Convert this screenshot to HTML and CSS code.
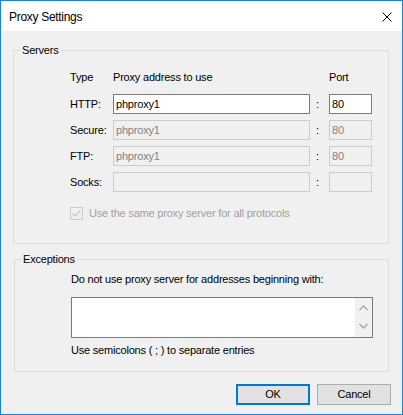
FILE: index.html
```html
<!DOCTYPE html>
<html>
<head>
<meta charset="utf-8">
<link rel="stylesheet" href="styles.css">
</head>
<body>
<div class="window">
  <div class="titlebar">
    <span class="title">Proxy Settings</span>
    <svg class="close" width="10" height="10" viewBox="0 0 10 10"><path d="M0.5 0.5 L9.5 9.5 M9.5 0.5 L0.5 9.5" stroke="#000" stroke-width="1" fill="none"/></svg>
  </div>
  <div class="content">
    <fieldset class="group servers">
      <legend>Servers</legend>
      <div class="group-body servers-body">
        <div class="grid">
          <span class="hdr">Type</span>
          <span class="hdr">Proxy address to use</span>
          <span></span>
          <span class="hdr">Port</span>

          <span class="lbl">HTTP:</span>
          <div class="field">phproxy1</div>
          <span class="colon">:</span>
          <div class="field">80</div>

          <span class="lbl">Secure:</span>
          <div class="field disabled">phproxy1</div>
          <span class="colon">:</span>
          <div class="field disabled">80</div>

          <span class="lbl">FTP:</span>
          <div class="field disabled">phproxy1</div>
          <span class="colon">:</span>
          <div class="field disabled">80</div>

          <span class="lbl">Socks:</span>
          <div class="field disabled"></div>
          <span class="colon">:</span>
          <div class="field disabled"></div>
        </div>
        <div class="check-row">
          <span class="checkbox"><svg width="11" height="11" viewBox="0 0 11 11"><path d="M1.5 5.5 L4 8 L9.5 2.5" stroke="#c4c4c4" stroke-width="1.2" fill="none"/></svg></span>
          <span class="check-label">Use the same proxy server for all protocols</span>
        </div>
      </div>
    </fieldset>

    <fieldset class="group exceptions">
      <legend>Exceptions</legend>
      <div class="group-body exceptions-body">
        <div class="exc-text">Do not use proxy server for addresses beginning with:</div>
        <div class="textarea">
          <div class="text-body"></div>
          <div class="scrollbar">
            <svg width="9" height="6" viewBox="0 0 9 6"><path d="M0.5 5 L4.5 1 L8.5 5" stroke="#a6a6a6" stroke-width="1.3" fill="none"/></svg>
            <svg width="9" height="6" viewBox="0 0 9 6"><path d="M0.5 1 L4.5 5 L8.5 1" stroke="#a6a6a6" stroke-width="1.3" fill="none"/></svg>
          </div>
        </div>
        <div class="exc-note">Use semicolons ( ; ) to separate entries</div>
      </div>
    </fieldset>

    <div class="buttons">
      <div class="btn default">OK</div>
      <div class="btn">Cancel</div>
    </div>
  </div>
</div>
</body>
</html>
```

FILE: styles.css
```css
* { box-sizing: border-box; }
html, body { margin: 0; padding: 0; background: #ffffff; }
body {
  font-family: "Liberation Sans", Arial, sans-serif;
  font-size: 11px;
  letter-spacing: -0.2px;
  color: #000;
}
.window {
  width: 403px;
  height: 415px;
  border: 1px solid #1883d7;
  background: #f0f0f0;
  display: flex;
  flex-direction: column;
}
.titlebar {
  height: 30px;
  background: #ffffff;
  display: flex;
  align-items: center;
  padding: 0 10px 0 8px;
  flex-shrink: 0;
}
.title {
  font-size: 12px;
  letter-spacing: -0.3px;
  flex: 1;
  padding-top: 1px;
}
.close { display: block; margin-top: 1px; }
.content {
  flex: 1;
  display: flex;
  flex-direction: column;
}
.group {
  margin: 0;
  padding: 0;
  border: 1px solid #dcdcdc;
  min-width: 0;
}
.group legend {
  padding: 0 2px;
  margin-left: 6px;
  line-height: 15px;
  height: 15px;
}
.servers { margin: 12px 13px 0 12px; }
.servers-body { padding: 12px 0 22px 56px; }
.grid {
  display: grid;
  grid-template-columns: 43px 197px 19px 43px;
  grid-template-rows: 18px repeat(4, 20px);
  row-gap: 6px;
  align-items: center;
}
.hdr { align-self: start; line-height: 15px; }
.lbl { line-height: 15px; }
.colon { padding-left: 6px; line-height: 15px; }
.field {
  height: 20px;
  border: 1px solid #7a7a7a;
  background: #fff;
  padding: 0 2px;
  line-height: 18px;
  white-space: nowrap;
  overflow: hidden;
}
.field.disabled {
  border-color: #cccccc;
  background: #f0f0f0;
  color: #838383;
}
.check-row {
  margin-top: 14px;
  height: 15px;
  display: flex;
  align-items: center;
  gap: 6px;
}
.checkbox {
  width: 13px;
  height: 13px;
  border: 1px solid #cccccc;
  background: #f0f0f0;
  display: flex;
  align-items: center;
  justify-content: center;
}
.checkbox svg { display: block; }
.check-label { color: #a0a0a0; line-height: 15px; }
.exceptions { margin: 8px 13px 0 13px; }
.exceptions-body { padding: 5px 0 13px 56px; }
.exc-text { line-height: 15px; }
.textarea {
  margin-top: 10px;
  width: 302px;
  height: 41px;
  border: 1px solid #7a7a7a;
  background: #fff;
  display: flex;
}
.text-body { flex: 1; }
.scrollbar {
  width: 17px;
  background: #f0f0f0;
  display: flex;
  flex-direction: column;
  align-items: center;
  justify-content: space-between;
  padding: 7px 0 8px;
}
.scrollbar svg { display: block; }
.exc-note { margin-top: 5px; line-height: 15px; }
.buttons {
  margin-top: 12px;
  display: flex;
  justify-content: flex-end;
  gap: 7px;
  padding-right: 11px;
}
.btn {
  width: 74px;
  height: 21px;
  border: 1px solid #adadad;
  background: #e1e1e1;
  text-align: center;
  line-height: 19px;
}
.btn.default {
  border: 2px solid #0078d7;
  line-height: 17px;
}
```
